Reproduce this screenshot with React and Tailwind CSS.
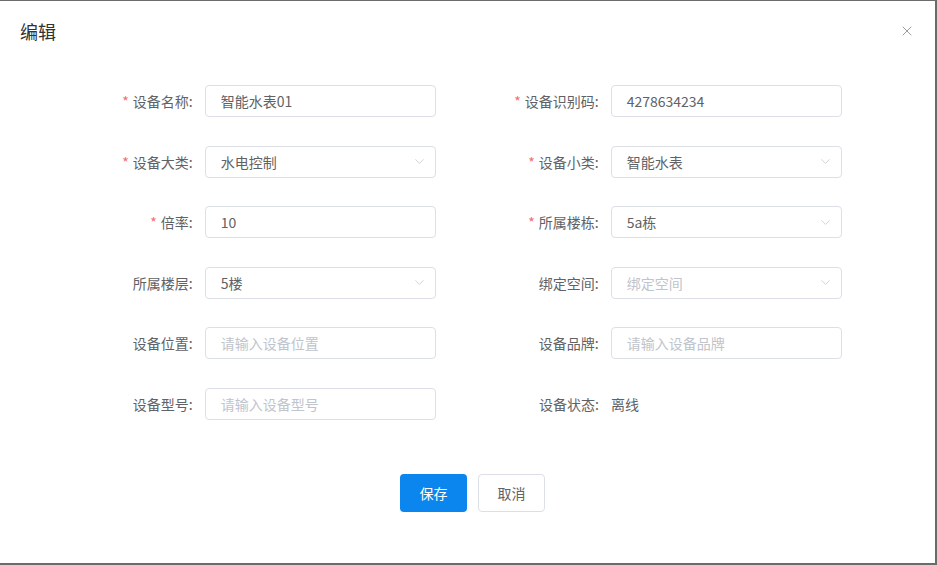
import { ChevronDown, X } from "lucide-react";

const rows = [
  [
    { label: "设备名称", required: true, type: "input", value: "智能水表01" },
    { label: "设备识别码", required: true, type: "input", value: "4278634234" },
  ],
  [
    { label: "设备大类", required: true, type: "select", value: "水电控制" },
    { label: "设备小类", required: true, type: "select", value: "智能水表" },
  ],
  [
    { label: "倍率", required: true, type: "input", value: "10" },
    { label: "所属楼栋", required: true, type: "select", value: "5a栋" },
  ],
  [
    { label: "所属楼层", type: "select", value: "5楼" },
    { label: "绑定空间", type: "select", placeholder: "绑定空间" },
  ],
  [
    { label: "设备位置", type: "input", placeholder: "请输入设备位置" },
    { label: "设备品牌", type: "input", placeholder: "请输入设备品牌" },
  ],
  [
    { label: "设备型号", type: "input", placeholder: "请输入设备型号" },
    { label: "设备状态", type: "text", value: "离线" },
  ],
];

function Field({ item }) {
  return (
    <div className="flex h-8 w-[343px] items-center">
      <label className="w-[112px] pr-3 text-right text-sm text-[#606266]">
        {item.required && <span className="mr-1 text-[#f56c6c]">*</span>}
        {item.label}:
      </label>
      {item.type === "text" ? (
        <span className="text-sm text-[#606266]">{item.value}</span>
      ) : (
        <div className="flex h-8 w-[232px] items-center rounded border border-[#dcdfe6] bg-white pl-[15px] pr-2">
          <span className={`flex-1 text-sm ${item.value ? "text-[#606266]" : "text-[#c0c4cc]"}`}>
            {item.value || item.placeholder}
          </span>
          {item.type === "select" && <ChevronDown size={15} strokeWidth={1.2} className="text-[#c0c4cc]" />}
        </div>
      )}
    </div>
  );
}

export default function App() {
  return (
    <div
      className="h-[565px] w-[937px] border-t border-r-2 border-b-2 border-[#6b6b6b] bg-white"
      style={{ fontFamily: "'Noto Sans CJK SC', 'Liberation Sans', sans-serif" }}
    >
      <div className="flex items-center justify-between pl-5 pr-[20px] pt-[18px]">
        <span className="text-lg leading-6 text-[#303133]">编辑</span>
        <X size={16} strokeWidth={1.4} className="text-[#909399]" />
      </div>

      <div className="mt-[42px] flex flex-col gap-y-[28.5px] pl-[93px]">
        {rows.map((row, i) => (
          <div key={i} className="flex gap-[63px]">
            {row.map((item) => (
              <Field key={item.label} item={item} />
            ))}
          </div>
        ))}
      </div>

      <div className="mt-[54px] flex gap-[11px] pl-[400px]">
        <button type="button" className="h-[38px] w-[67px] rounded bg-[#0a86ee] text-sm text-white">
          保存
        </button>
        <button
          type="button"
          className="h-[38px] w-[67px] rounded border border-[#dcdfe6] bg-white text-sm text-[#606266]"
        >
          取消
        </button>
      </div>
    </div>
  );
}
